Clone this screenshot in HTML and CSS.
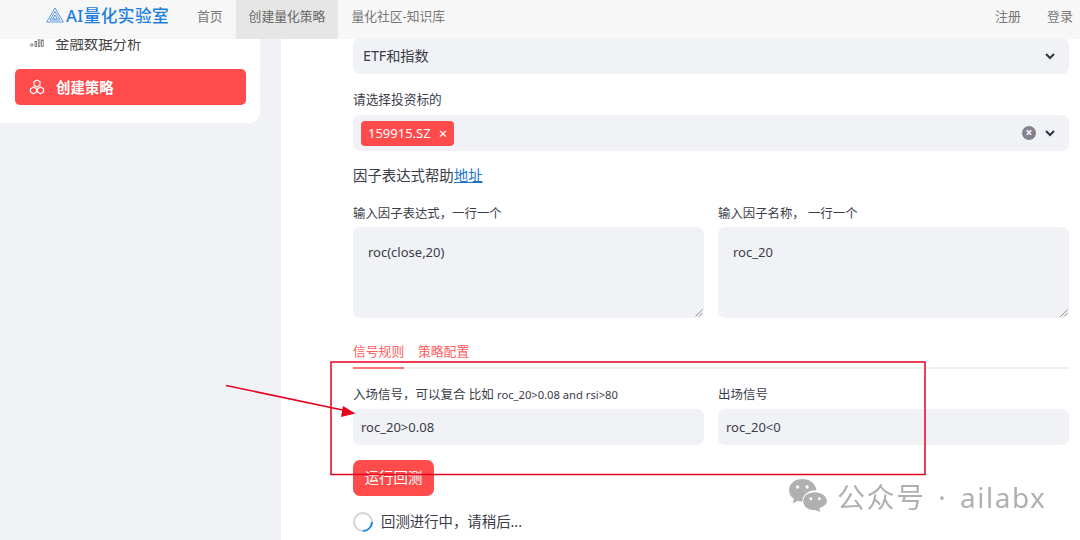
FILE: index.html
```html
<!DOCTYPE html>
<html lang="zh-CN">
<head>
<meta charset="utf-8">
<title>AI量化实验室</title>
<link rel="stylesheet" href="styles.css">
</head>
<body>
<header class="topbar">
  <div class="brand">
    <svg class="brand-icon" width="18" height="16" viewBox="0 0 18 16" fill="none" stroke="#5a9be6" stroke-width="1" stroke-linejoin="round">
      <path d="M9 1 L17.300 15 H0.700 Z"/><path d="M9 4.500 L14 13 H4 Z"/><path d="M9 8 L11.300 12 H6.700 Z"/>
    </svg>
    <span class="brand-name">AI量化实验室</span>
  </div>
  <nav class="nav">
    <a class="nav-item">首页</a>
    <a class="nav-item active">创建量化策略</a>
    <a class="nav-item">量化社区-知识库</a>
  </nav>
  <div class="auth">
    <a class="auth-item">注册</a>
    <a class="auth-item">登录</a>
  </div>
</header>
<div class="page">
  <aside class="sidebar">
    <div class="side-row">
      <svg width="14" height="10" viewBox="0 0 14 10" fill="none" stroke="#666" stroke-width=".8"><circle cx="1.800" cy="8" r="1.300"/><rect x="5" y="4.500" width="1.600" height="5"/><rect x="8.300" y="1.500" width="1.600" height="8"/><rect x="11.600" y="3" width="1.600" height="6.500"/></svg>
      <span>金融数据分析</span>
    </div>
    <div class="side-btn">
      <svg width="16" height="16" viewBox="0 0 16 16" fill="none" stroke="#fff" stroke-width="1.200" stroke-linejoin="round"><path d="M8 1 L11 2.800 V6.200 L8 8 L5 6.200 V2.800 Z"/><path d="M4.500 8 L7.500 9.700 V13 L4.500 14.800 L1.500 13 V9.700 Z"/><path d="M11.500 8 L14.500 9.700 V13 L11.500 14.800 L8.500 13 V9.700 Z"/></svg>
      <span>创建策略</span>
    </div>
  </aside>
  <main class="main">
    <div class="select first">
      <span class="select-value">ETF和指数</span>
      <svg class="chev" width="10" height="7" viewBox="0 0 10 7" fill="none" stroke="#31333f" stroke-width="2"><path d="M1 1 L5 5 L9 1"/></svg>
    </div>
    <label class="label sel-label">请选择投资标的</label>
    <div class="select multi">
      <span class="tag">159915.SZ<i class="tag-x">×</i></span>
      <span class="spacer"></span>
      <span class="clear">×</span>
      <svg class="chev" width="10" height="7" viewBox="0 0 10 7" fill="none" stroke="#31333f" stroke-width="2"><path d="M1 1 L5 5 L9 1"/></svg>
    </div>
    <p class="help">因子表达式帮助<a class="link">地址</a></p>
    <div class="cols factor-cols">
      <div class="col">
        <label class="label">输入因子表达式，一行一个</label>
        <div class="textarea">roc(close,20)<svg class="grip" width="8" height="8" viewBox="0 0 8 8" fill="none" stroke="#777" stroke-width=".8"><path d="M0.500 7.500 L7.500 0.500"/><path d="M4 7.500 L7.500 4"/></svg></div>
      </div>
      <div class="col">
        <label class="label">输入因子名称， 一行一个</label>
        <div class="textarea">roc_20<svg class="grip" width="8" height="8" viewBox="0 0 8 8" fill="none" stroke="#777" stroke-width=".8"><path d="M0.500 7.500 L7.500 0.500"/><path d="M4 7.500 L7.500 4"/></svg></div>
      </div>
    </div>
    <div class="tabs">
      <span class="tab current">信号规则</span>
      <span class="tab">策略配置</span>
    </div>
    <div class="cols signal-cols">
      <div class="col">
        <label class="label">入场信号，可以复合 比如 <small class="hint">roc_20&gt;0.08 and rsi&gt;80</small></label>
        <div class="input">roc_20&gt;0.08</div>
      </div>
      <div class="col">
        <label class="label">出场信号</label>
        <div class="input">roc_20&lt;0</div>
      </div>
    </div>
    <button class="run">运行回测</button>
    <div class="status"><span class="spinner"></span><span>回测进行中，请稍后...</span></div>
  </main>
</div>
<svg class="annot" width="1080" height="540" viewBox="0 0 1080 540" fill="none">
  <rect x="331" y="362" width="594" height="112.500" stroke="#e6001e" stroke-width="1.500"/>
  <path d="M226 385.500 L345 410.500" stroke="#e6001e" stroke-width="1.500"/>
  <path d="M355.500 413.500 L343 406 L341 417 Z" fill="#e6001e"/>
</svg>
<div class="watermark">
  <svg width="42" height="34" viewBox="0 0 42 36" fill="#b0b0b0">
    <path d="M15 1 C7 1 1 6 1 13 C1 17 3 20 6 22 L5 27 L10 24 C12 25 14 25 15 25 C15 18 21 13 30 13 C29 6 23 1 15 1 Z"/>
    <path d="M28 15 C21 15 16 19 16 24.500 C16 30 21 34 28 34 L34 36 L33 32 C37 30 41 28 41 24.500 C41 19 35 15 28 15 Z"/>
    <circle cx="10" cy="9.500" r="1.800" fill="#fff"/><circle cx="20" cy="9.500" r="1.800" fill="#fff"/>
    <circle cx="24" cy="22" r="1.500" fill="#fff"/><circle cx="33" cy="22" r="1.500" fill="#fff"/>
  </svg>
  <span class="wm-text">公众号 · ailabx</span>
</div>
</body>
</html>
```
FILE: styles.css
```css
* { box-sizing: border-box; }
html, body { margin: 0; height: 540px; overflow: hidden; }
body {
  background: #f0f2f6;
  color: #3a3c48;
  font-family: "Noto Sans", "Noto Sans CJK SC", sans-serif;
  font-size: 14.400px;
}
.topbar {
  position: fixed; top: 0; left: 0; right: 0; z-index: 2;
  height: 39px; display: flex; align-items: stretch;
  background: #f7f7f7; color: #777;
  font-size: 12.800px;
}
.brand { display: flex; align-items: center; gap: 2px; padding: 0 0 9px 46px; width: 184px; }
.brand-name { color: #1a7fe0; font-size: 16.700px; font-weight: 500; white-space: nowrap; letter-spacing: .4px; }
.nav { display: flex; }
.nav-item { display: flex; align-items: center; padding: 0 13px 9px; white-space: nowrap; }
.nav-item.active { background: #e6e6e6; color: #666; }
.auth { margin-left: auto; display: flex; align-items: center; gap: 26px; padding: 0 7px 9px 0; font-size: 13px; }
.page { display: flex; height: 540px; gap: 21px; align-items: flex-start; }
.sidebar {
  width: 260px; height: 123px; background: #fff; border-radius: 0 0 10px 0;
  padding: 27px 14px 0 15px; display: flex; flex-direction: column; gap: 12px;
}
.side-row { height: 30px; display: flex; align-items: center; gap: 11px; padding-left: 15px; color: #444; }
.side-btn {
  height: 36px; background: #ff4b4b; color: #fff; border-radius: 5px;
  display: flex; align-items: center; gap: 11px; padding: 0 0 1px 14px;
  font-weight: 700;
}
.main { flex: 1; height: 540px; background: #fff; padding: 38px 11px 0 72px; }
.select, .input { background: #f0f2f6; border-radius: 7px; height: 36px; display: flex; align-items: center; }
.select { padding: 0 14px 0 10px; justify-content: space-between; }
.select-value { font-size: 14.200px; position: relative; top: -1px; }
.label { display: block; font-size: 12.500px; line-height: 18px; white-space: nowrap; }
.sel-label { margin-top: 16px; font-size: 12.700px; }
.multi { margin-top: 7px; padding-left: 8px; justify-content: flex-start; }
.spacer { flex: 1; }
.tag {
  background: #ff4b4b; color: #fff; border-radius: 4px; height: 25px;
  display: flex; align-items: center; padding: 0 7px; font-size: 13px;
}
.tag-x { font-style: normal; margin-left: 8px; font-size: 15px; }
.clear {
  width: 14px; height: 14px; border-radius: 50%; background: #83838f; color: #fff;
  display: flex; align-items: center; justify-content: center; font-size: 12px; line-height: 1; font-weight: 700;
  margin-right: 9px;
}
.help { margin: 14px 0 0; line-height: 22px; }
.link { color: #1a73c8; text-decoration: underline; }
.cols { display: grid; grid-template-columns: 1fr 1fr; gap: 14px; }
.factor-cols { margin-top: 18px; }
.factor-cols .label { margin-bottom: 4px; font-size: 12.400px; }
.textarea {
  position: relative; height: 91px; background: #f0f2f6; border-radius: 7px;
  padding: 15px 15px; font-size: 13px; line-height: 20px;
}
.grip { position: absolute; right: 1px; bottom: 1px; }
.tabs {
  margin-top: 23px; display: flex; gap: 14px; height: 28px;
  border-bottom: 2px solid #f0f0f0; font-size: 12.800px; color: #ff4b4b; line-height: 20px;
}
.tab { height: 28px; opacity: .9; white-space: nowrap; }
.tab.current { border-bottom: 2px solid #ff6b6b; width: 51px; }
.signal-cols { margin-top: 17px; }
.signal-cols .label { margin-bottom: 5px; }
.hint { font-size: 11.200px; }
.input { padding-left: 8px; font-size: 13px; }
.run {
  display: block; margin-top: 15px; width: 81px; height: 36px; border: 0; border-radius: 7px;
  padding: 0 0 3px;
  background: #ff4b4b; color: #fff; font: inherit;
}
.status { margin-top: 16px; display: flex; align-items: center; gap: 8px; line-height: 20px; }
.spinner {
  width: 20px; height: 20px; border-radius: 50%;
  border: 2.500px solid #d3d3d3; border-right-color: #1e88e5;
  transform: rotate(45deg);
}
.annot { position: fixed; top: 0; left: 0; z-index: 3; pointer-events: none; }
.watermark {
  position: fixed; left: 787px; top: 478px; z-index: 4; display: flex; align-items: flex-start; gap: 8px;
  color: #b0b0b0; white-space: nowrap;
}
.wm-text { font-size: 28px; line-height: 38px; letter-spacing: 1.500px; word-spacing: 4px; }
```
